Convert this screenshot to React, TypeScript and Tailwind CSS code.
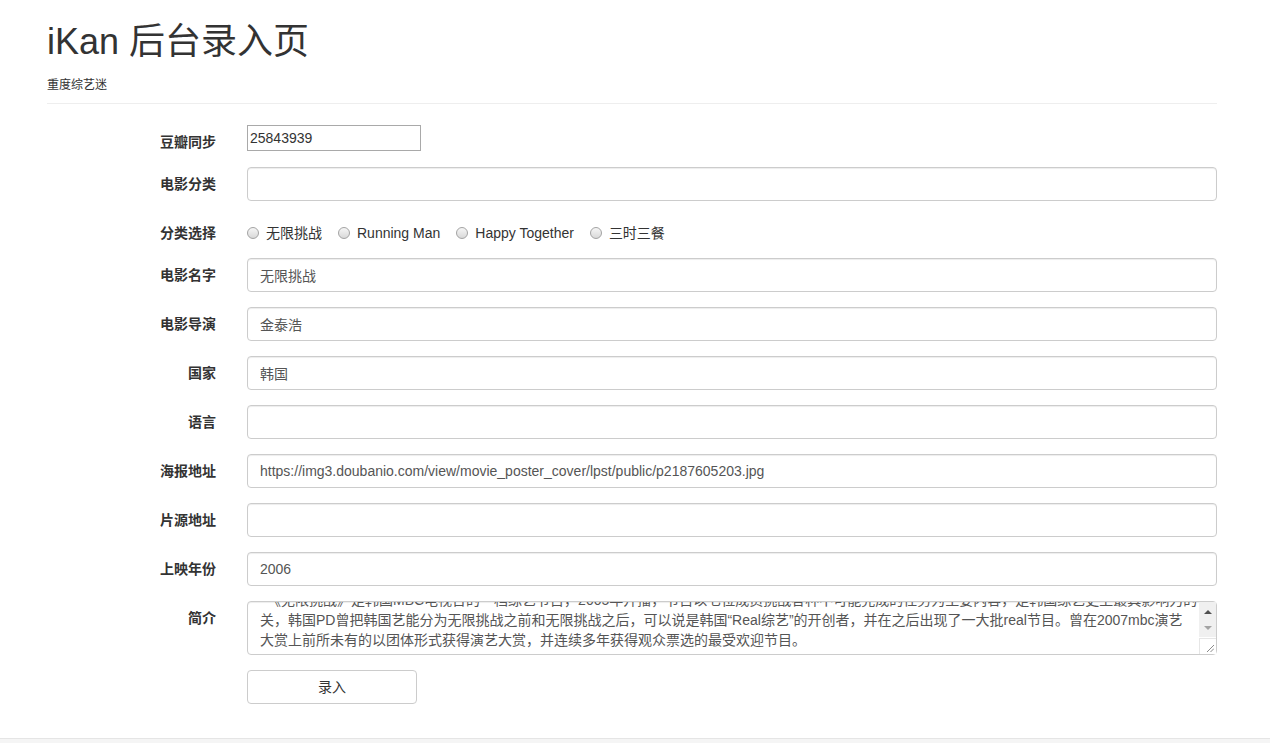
import { useEffect, useRef, type ReactNode } from 'react';

const font = { fontFamily: '"Liberation Sans", "Noto Sans CJK SC", sans-serif' };

const intro =
    '　《无限挑战》是韩国MBC电视台的一档综艺节目，2005年开播，节目以七位成员挑战各种不可能完成的任务为主要内容，是韩国综艺史上最具影响力的节目之一，几乎所有韩国综艺都与其息息相\n' +
    '关，韩国PD曾把韩国艺能分为无限挑战之前和无限挑战之后，可以说是韩国“Real综艺”的开创者，并在之后出现了一大批real节目。曾在2007mbc演艺\n' +
    '大赏上前所未有的以团体形式获得演艺大赏，并连续多年获得观众票选的最受欢迎节目。';

function Row({ label, children }: { label: string; children: ReactNode }) {
    return (
        <div className="mb-[15px] flex items-start">
            <label className="w-[200px] shrink-0 pr-[31px] pt-[7px] text-right text-[14px] font-bold leading-[20px] text-[#333]">
                {label}
            </label>
            <div className="w-[970px]">{children}</div>
        </div>
    );
}

function TextInput({ value = '' }: { value?: string }) {
    return (
        <input
            type="text"
            defaultValue={value}
            className="block h-[34px] w-full rounded-[4px] border border-[#ccc] bg-white px-[12px] text-[14px] text-[#555] shadow-[inset_0_1px_1px_rgba(0,0,0,0.075)] outline-none"
        />
    );
}

const categories = ['无限挑战', 'Running Man', 'Happy Together', '三时三餐'];

export default function App() {
    const areaRef = useRef<HTMLTextAreaElement>(null);

    useEffect(() => {
        if (areaRef.current) areaRef.current.scrollTop = 18;
    }, []);

    return (
        <div className="min-h-screen bg-white text-[#333]" style={font}>
            <div className="ml-[47px] w-[1170px]">
                <div className="border-b border-[#eee] pb-[9px] pt-[22px]">
                    <h1 className="text-[36px] font-normal leading-[40px] text-[#333]">iKan 后台录入页</h1>
                    <p className="mt-[15px] text-[12px] leading-[17px] text-[#333]">重度综艺迷</p>
                </div>

                <form className="mt-[21px]" onSubmit={(e) => e.preventDefault()}>
                    <Row label="豆瓣同步">
                        <input
                            type="text"
                            defaultValue="25843939"
                            className="block h-[26px] w-[174px] border border-[#a9a9a9] bg-white px-[2px] text-[14px] text-[#333] outline-none"
                        />
                    </Row>
                    <Row label="电影分类">
                        <TextInput />
                    </Row>
                    <Row label="分类选择">
                        <div className="flex items-center gap-[16px] pt-[7px] text-[14px] leading-[20px] text-[#333]">
                            {categories.map((c) => (
                                <label key={c} className="flex items-center gap-[7px]">
                                    <input
                                        type="radio"
                                        name="category"
                                        className="h-[12px] w-[12px] appearance-none rounded-full border border-[#a3a3a3] bg-linear-to-b from-[#f6f6f6] to-[#d9d9d9]"
                                    />
                                    <span>{c}</span>
                                </label>
                            ))}
                        </div>
                    </Row>
                    <Row label="电影名字">
                        <TextInput value="无限挑战" />
                    </Row>
                    <Row label="电影导演">
                        <TextInput value="金泰浩" />
                    </Row>
                    <Row label="国家">
                        <TextInput value="韩国" />
                    </Row>
                    <Row label="语言">
                        <TextInput />
                    </Row>
                    <Row label="海报地址">
                        <TextInput value="https://img3.doubanio.com/view/movie_poster_cover/lpst/public/p2187605203.jpg" />
                    </Row>
                    <Row label="片源地址">
                        <TextInput />
                    </Row>
                    <Row label="上映年份">
                        <TextInput value="2006" />
                    </Row>
                    <Row label="简介">
                        <div className="relative">
                            <textarea
                                ref={areaRef}
                                wrap="off"
                                defaultValue={intro}
                                className="block h-[54px] w-full overflow-hidden whitespace-pre rounded-[4px] border border-[#ccc] bg-white px-[12px] py-[6px] text-[14px] leading-[20px] text-[#555] shadow-[inset_0_1px_1px_rgba(0,0,0,0.075)] outline-none"
                            />
                            {/* classic scrollbar */}
                            <div className="pointer-events-none absolute right-[1px] top-[1px] flex h-[35px] w-[17px] flex-col items-center bg-[#f0f0f0] pt-[8px]">
                                <div className="h-0 w-0 border-x-[4px] border-b-[4px] border-x-transparent border-b-[#505050]" />
                                <div className="mt-[12px] h-0 w-0 border-x-[4px] border-t-[4px] border-x-transparent border-t-[#a3a3a3]" />
                            </div>
                            <div className="pointer-events-none absolute bottom-[1px] right-[1px] h-[16px] w-[17px] border-l border-t border-[#e6e6e6] bg-white" />
                            <svg className="pointer-events-none absolute bottom-[3px] right-[3px]" width="8" height="8" viewBox="0 0 8 8">
                                <path d="M1 8 L8 1 M4.5 8 L8 4.5" stroke="#8a8a8a" strokeWidth="1" />
                            </svg>
                        </div>
                    </Row>
                    <div className="flex">
                        <div className="w-[200px] shrink-0" />
                        <button
                            type="submit"
                            className="h-[34px] w-[170px] rounded-[4px] border border-[#ccc] bg-white text-[14px] text-[#333]"
                        >
                            录入
                        </button>
                    </div>
                </form>
            </div>
            <div className="mt-[34px] h-[60px] border-t border-[#e5e5e5] bg-[#f5f5f5]" />
        </div>
    );
}
